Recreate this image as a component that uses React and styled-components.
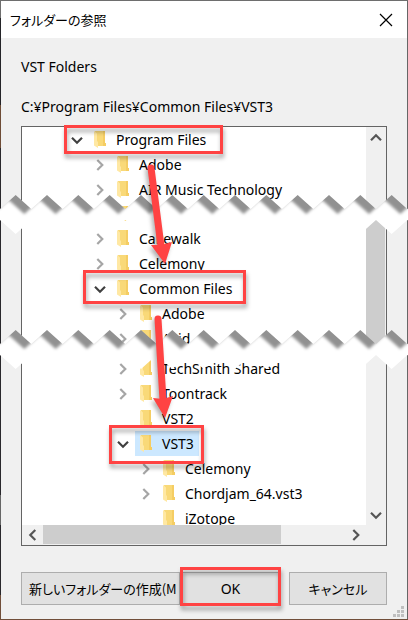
import React from 'react'
import styled, { createGlobalStyle } from 'styled-components'

const GlobalStyle = createGlobalStyle`
  *{
    box-sizing:border-box;
  }
  body{
    margin:0;
    background:#fff;
    font-family:"Noto Sans","Noto Sans CJK JP",sans-serif;
    font-size:14px;
    color:#000;
  }
  button{
    font:inherit;
    color:inherit;
    padding:0;
    border:none;
    background:none;
  }
`

const Frame = styled.div`
  position:relative;
  overflow:hidden;
  padding:1px;
  background:linear-gradient(#6e6e6e 0 18px,#242428 18px 105px,#6e4c36 105px 148px,#29282c 148px 495px,#666 495px 525px,#29282c 525px 595px,#714f3a 595px);
`

const Dialog = styled.div`
  position:relative;
  background:#f0f0f0;
  box-shadow:1px 0 #666,0 -1px #6e6e6e;
`

const TitleBar = styled.header`
  display:flex;
  align-items:center;
  justify-content:space-between;
  height:37px;
  padding:0 14px 0 9px;
  background:#fff;
`

const Title = styled.h1`
  margin:0;
  font-family:"Noto Sans CJK JP",sans-serif;
  font-size:13px;
  font-weight:400;
  line-height:20px;
  font-feature-settings:"palt";
`

const CloseButton = styled.button`
  display:flex;
`

const Content = styled.div`
  padding:19px 20px 14px;
`

const Message = styled.p`
  margin:0 0 ${props => props.$space}px;
  line-height:20px;
`

const TreeBox = styled.div`
  display:grid;
  grid-template-columns:minmax(0,1fr) 20px;
  grid-template-rows:auto 20px;
  border:1px solid #646464;
  background:#fff;
`

const Tree = styled.ul`
  margin:0;
  padding:0;
  list-style:none;
`

const Row = styled.li`
  display:flex;
  height:${props => props.$cut || 25}px;
  margin-top:${props => props.$space || 0}px;
  padding-left:${props => 48 + props.$level * 23}px;
  overflow:${props => props.$cut ? 'hidden' : 'visible'};
`

const Item = styled.div`
  position:relative;
  display:flex;
  gap:5px;
  height:25px;
`

const Toggle = styled.button`
  display:flex;
  align-items:center;
  justify-content:center;
  width:14px;
`

const Label = styled.span`
  display:flex;
  align-items:center;
  gap:10px;
  padding:0 5px;
  line-height:25px;
  white-space:nowrap;
  background:${props => props.$selected ? '#cce8ff' : 'none'};
`

const Highlight = styled.span`
  position:absolute;
  z-index:2;
  inset:${props => props.$inset};
  border:3px solid #ff4343;
  filter:drop-shadow(1px 4px 2px rgba(0,0,0,.35));
  pointer-events:none;
`

const ScrollBar = styled.div`
  display:flex;
  flex-direction:${props => props.$vertical ? 'column' : 'row'};
  background:#f0f0f0;
`

const ScrollButton = styled.button`
  display:flex;
  align-items:center;
  justify-content:center;
  flex:0 0 21px;
`

const Track = styled.div`
  flex:${props => props.$size} 1 0;
`

const Thumb = styled(Track)`
  background:#cdcdcd;
  margin:${props => props.$vertical ? '0 1px 0 0' : '0 0 1px'};
`

const Corner = styled.div`
  background:#f0f0f0;
`

const Buttons = styled.div`
  display:flex;
  margin-top:26px;
`

const ButtonSlot = styled.div`
  position:relative;
  display:flex;
  flex:${props => props.$size} 1 0;
  min-width:0;
  margin-left:${props => props.$space || 0}px;
`

const Button = styled.button`
  flex:1;
  height:33px;
  min-width:0;
  padding:0 ${props => props.$left ? 7 : 0}px;
  overflow:hidden;
  border:1px solid #adadad;
  background:#e1e1e1;
  font-family:${props => props.$latin ? '"Noto Sans",sans-serif' : '"Noto Sans CJK JP",sans-serif'};
  font-size:${props => props.$latin ? 14 : 13}px;
  font-feature-settings:"palt";
  text-align:${props => props.$left ? 'left' : 'center'};
  white-space:nowrap;
`

const Grip = styled.svg`
  position:absolute;
  right:3px;
  bottom:2px;
`

const TearSvg = styled.svg`
  position:absolute;
  z-index:1;
  left:0;
  top:${props => props.$top}px;
`

const ArrowLayer = styled.svg`
  position:absolute;
  z-index:3;
  left:0;
  top:0;
  filter:drop-shadow(-2px 3px 2px rgba(0,0,0,.3));
  pointer-events:none;
`

const CHEVRONS = {
  right: 'M4.3 2 L9.3 7 L4.3 12',
  left: 'M9.3 2 L4.3 7 L9.3 12',
  down: 'M2 4.7 L7 9.7 L12 4.7',
  up: 'M2 9.3 L7 4.3 L12 9.3',
}

function Chevron({ dir, color, width = 2.2 }) {
  return (
    <svg width="14" height="14" viewBox="0 0 14 14" fill="none" stroke={color} strokeWidth={width}>
      <path d={CHEVRONS[dir]} />
    </svg>
  )
}

function FolderIcon() {
  return (
    <svg width="12" height="17" viewBox="0 0 12 17">
      <path d="M1 0H11V12H12V15H3Z" fill="#f9d978" />
      <path d="M9 0H11V12H12V15H9Z" fill="#f5cd63" />
      <path d="M0 0L3 2.5V10L4 11V17L0 14.5Z" fill="#ffe8a3" />
    </svg>
  )
}

const STEP = 94 / 3
const DEPTH = 14
const TEETH = 60

// zigzag from left to right, teeth alternate between y1 and y2
const zigzag = (y1, y2) => {
  const points = []
  for (let i = -2; i < TEETH; i++) {
    points.push(`${i * STEP},${y1}`, `${(i + 0.5) * STEP},${y2}`)
  }
  return points
}

function Tear({ id, top }) {
  const upper = zigzag(DEPTH, 0)
  const lower = zigzag(DEPTH + 11, DEPTH * 2 + 11)
  return (
    <TearSvg $top={top} width="100%" height="40" aria-hidden="true">
      <defs>
        <clipPath id={`${id}-gap`}>
          <polygon points={[...upper, ...[...lower].reverse()].join(' ')} />
        </clipPath>
        <filter id={`${id}-blur`} x="-5%" y="-50%" width="110%" height="200%">
          <feGaussianBlur stdDeviation="1.8" />
        </filter>
      </defs>
      <g clipPath={`url(#${id}-gap)`}>
        <rect width="100%" height="40" fill="#fff" />
        <g transform="translate(-7 5)">
          <polygon points={[`${-2 * STEP},-20`, ...upper, `${TEETH * STEP},-20`].join(' ')} fill="#000" fillOpacity=".43" filter={`url(#${id}-blur)`} />
        </g>
      </g>
    </TearSvg>
  )
}

const folders = [
  { name: 'Program Files', level: 0, open: true, mark: '-2px -12px -2px -6px' },
  { name: 'Adobe', level: 1, open: false },
  { name: 'AIR Music Technology', level: 1, open: false },
  { name: '', level: 1, cut: 24 },
  { name: 'Cakewalk', level: 1, open: false },
  { name: 'Celemony', level: 1, open: false },
  { name: 'Common Files', level: 1, open: true, mark: '-6px -9px -3px -10px' },
  { name: 'Adobe', level: 2, open: false },
  { name: 'Avid', level: 2, open: false },
  { name: 'TechSmith Shared', level: 2, open: false, space: 5 },
  { name: 'Toontrack', level: 2, open: false },
  { name: 'VST2', level: 2 },
  { name: 'VST3', level: 2, open: true, selected: true, mark: '-6px -5px -8px -7px' },
  { name: 'Celemony', level: 3, open: false },
  { name: 'Chordjam_64.vst3', level: 3, open: false },
  { name: 'iZotope', level: 3, cut: 19 },
]

function TreeRow({ folder }) {
  const { name, level, open, mark, selected, cut, space } = folder
  return (
    <Row $level={level} $cut={cut} $space={space}>
      <Item>
        <Toggle as={open === undefined ? 'span' : 'button'} aria-label={open === undefined ? undefined : name}>
          {open !== undefined && <Chevron dir={open ? 'down' : 'right'} color={open ? '#404040' : '#a6a6a6'} />}
        </Toggle>
        <Label $selected={selected}>
          <FolderIcon />
          {name}
        </Label>
        {mark && <Highlight $inset={mark} />}
      </Item>
    </Row>
  )
}

export default function App() {
  return (
    <Frame>
      <GlobalStyle />
      <Dialog role="dialog" aria-labelledby="dialog-title">
        <TitleBar>
          <Title id="dialog-title">フォルダーの参照</Title>
          <CloseButton aria-label="閉じる">
            <svg width="14" height="14" viewBox="0 0 14 14" stroke="#000" strokeWidth="1.2">
              <path d="M1 1L13 13M13 1L1 13" />
            </svg>
          </CloseButton>
        </TitleBar>
        <Content>
          <Message $space={20}>VST Folders</Message>
          <Message $space={9}>C:¥Program Files¥Common Files¥VST3</Message>
          <TreeBox>
            <Tree>
              {folders.map((folder, i) => <TreeRow key={i} folder={folder} />)}
            </Tree>
            <ScrollBar $vertical>
              <ScrollButton aria-label="上"><Chevron dir="up" color="#555" /></ScrollButton>
              <Track $size={68} />
              <Thumb $size={134} $vertical />
              <Track $size={153} />
              <ScrollButton aria-label="下"><Chevron dir="down" color="#555" /></ScrollButton>
            </ScrollBar>
            <ScrollBar>
              <ScrollButton aria-label="左"><Chevron dir="left" color="#555" /></ScrollButton>
              <Thumb $size={238} />
              <Track $size={64} />
              <ScrollButton aria-label="右"><Chevron dir="right" color="#555" /></ScrollButton>
            </ScrollBar>
            <Corner />
          </TreeBox>
          <Buttons>
            <ButtonSlot $size={159}>
              <Button $left>新しいフォルダーの作成(M</Button>
            </ButtonSlot>
            <ButtonSlot $size={101}>
              <Button $latin>OK</Button>
              <Highlight $inset="-5px 0 -1px" />
            </ButtonSlot>
            <ButtonSlot $size={98} $space={8}>
              <Button>キャンセル</Button>
            </ButtonSlot>
          </Buttons>
        </Content>
        <Grip width="11" height="11" fill="#bfbfbf">
          <path d="M8 0h3v3h-3zM4 4h3v3h-3zM8 4h3v3h-3zM0 8h3v3h-3zM4 8h3v3h-3zM8 8h3v3h-3z" />
        </Grip>
      </Dialog>
      <Tear id="tear-top" top={195} />
      <Tear id="tear-bottom" top={330} />
      <ArrowLayer width="408" height="440" fill="#ff4343" stroke="#ff4343" aria-hidden="true">
        <path d="M151 168L161 246" strokeWidth="7" strokeLinecap="round" />
        <path d="M151 245L161 245L172 242L165 264Z" stroke="none" />
        <path d="M158 319L163 400" strokeWidth="7" strokeLinecap="round" />
        <path d="M153 398L163 399L173 396L165 418Z" stroke="none" />
      </ArrowLayer>
    </Frame>
  )
}
